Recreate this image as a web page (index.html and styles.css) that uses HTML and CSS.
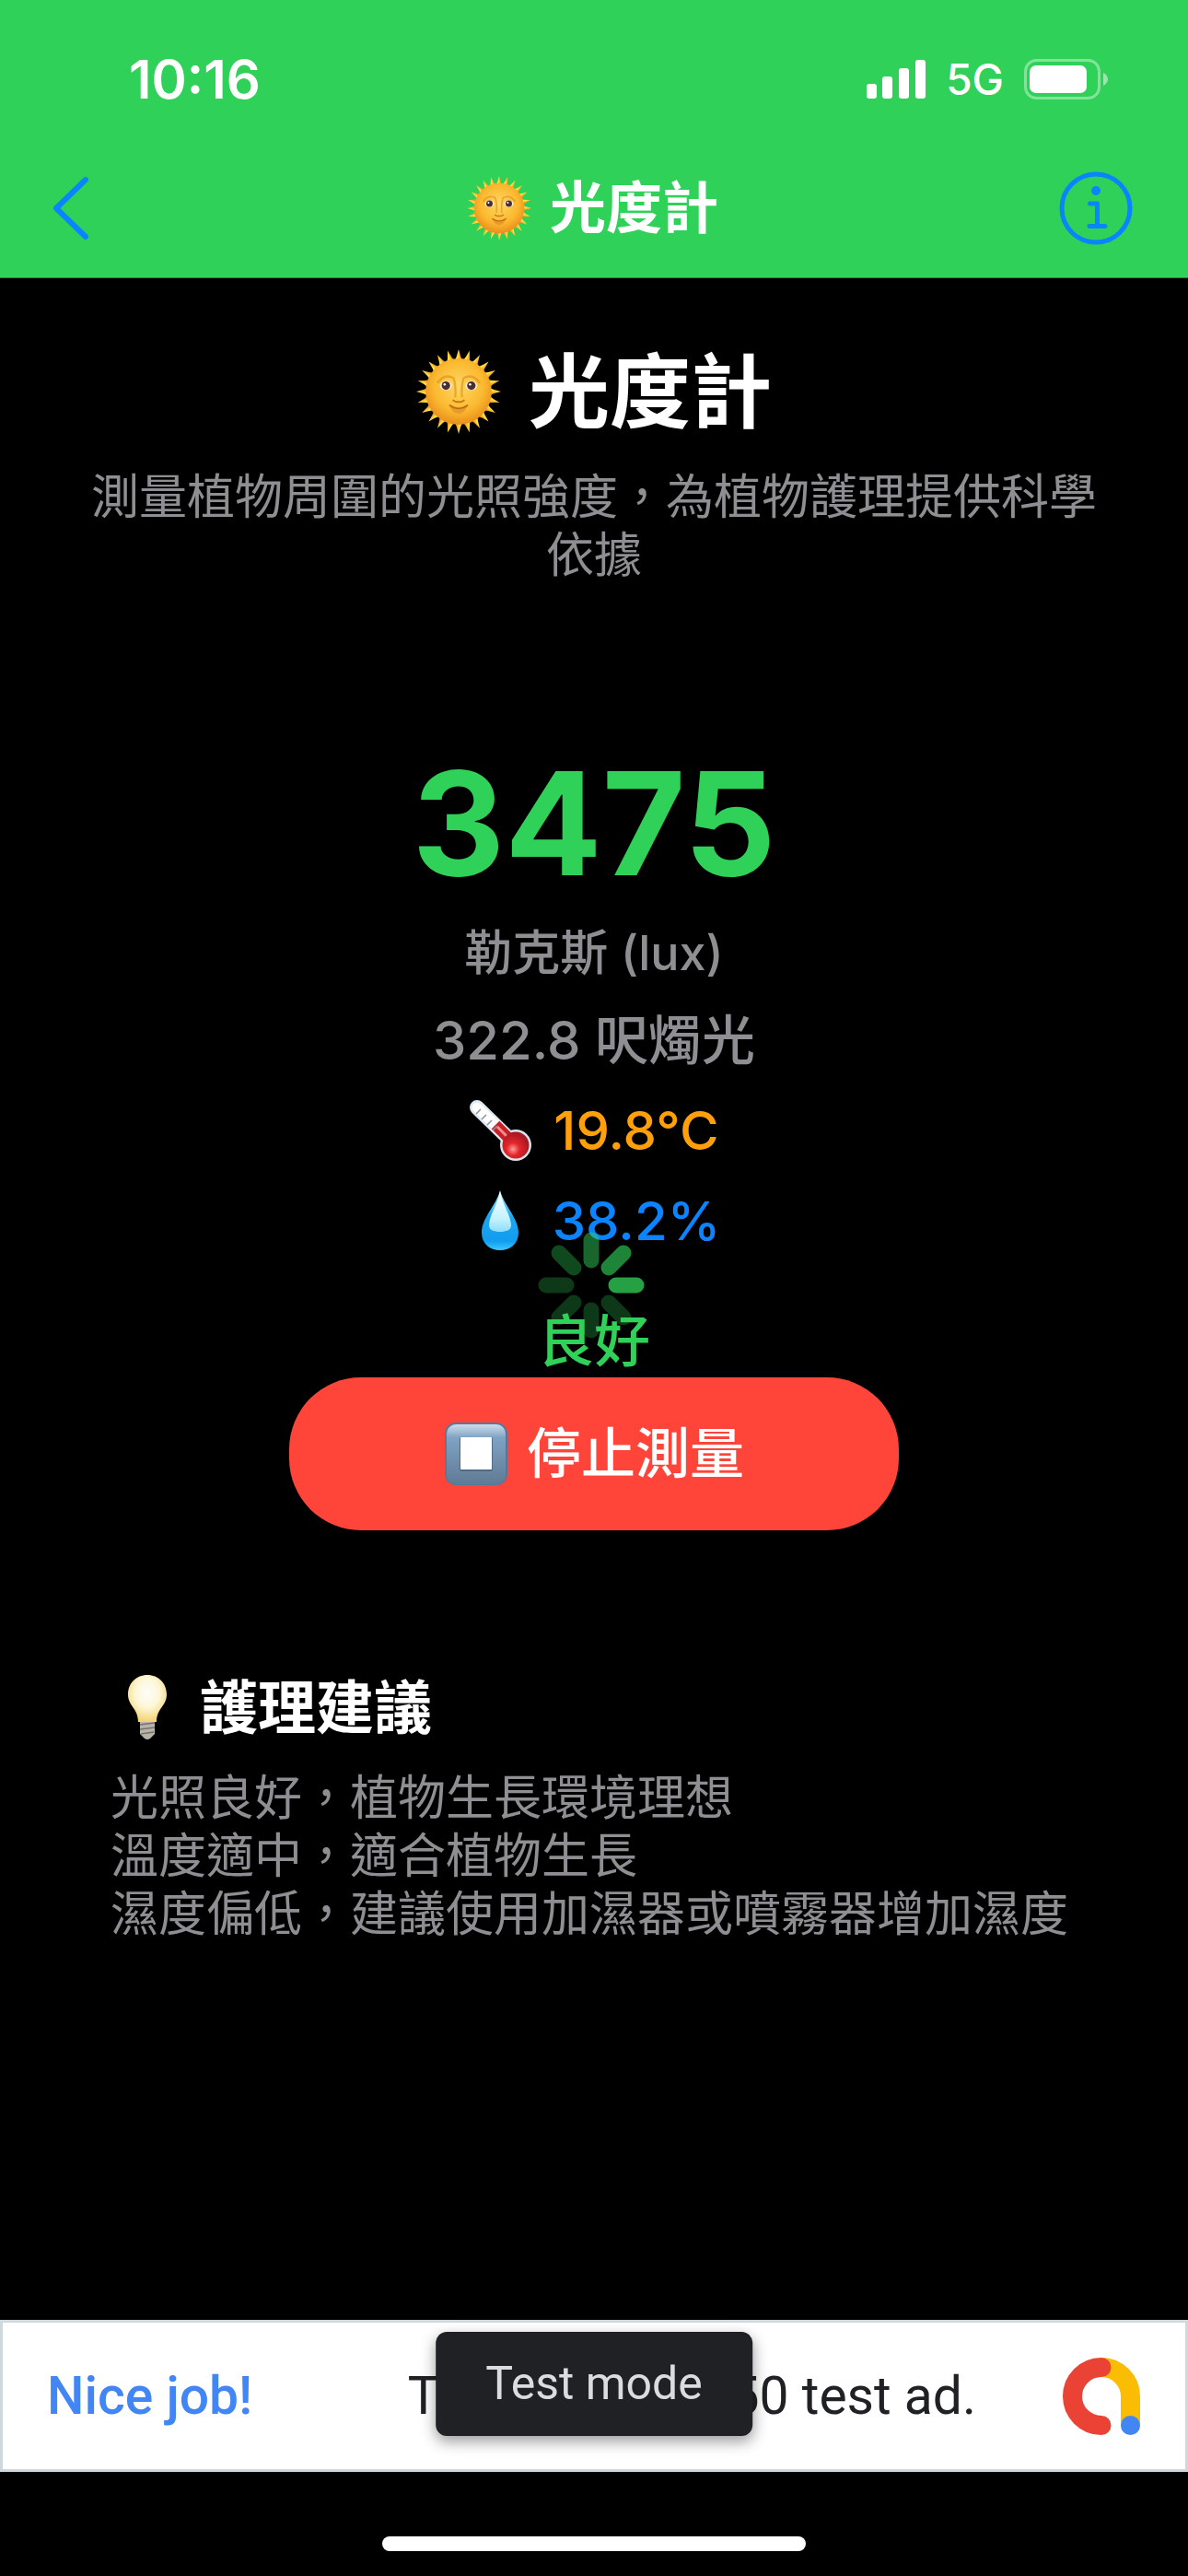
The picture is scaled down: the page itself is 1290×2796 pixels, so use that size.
FILE: index.html
```html
<!DOCTYPE html>
<html lang="zh-Hant">
<head>
    <meta charset="UTF-8">
    <meta name="viewport" content="width=device-width, initial-scale=1">
    <title>光度計</title>
    <link rel="stylesheet" href="styles.css">
</head>
<body>
    <svg class="defs" aria-hidden="true">
        <defs>
            <radialGradient id="sunFace" cx="50%" cy="42%" r="58%">
                <stop offset="0" stop-color="#ffd764"/>
                <stop offset="0.65" stop-color="#fbb92f"/>
                <stop offset="1" stop-color="#e98f1c"/>
            </radialGradient>
            <linearGradient id="ray" x1="0" x2="1" y1="0" y2="0">
                <stop offset="0.4" stop-color="#ffe23d"/>
                <stop offset="0.7" stop-color="#f39a2b"/>
            </linearGradient>
            <g id="rays">
                <path id="oneRay" d="M44.5 16 Q48 9 50 0 Q52 9 55.5 16 Z" fill="url(#ray)"/>
                <use href="#oneRay" transform="rotate(15 50 50)"/>
                <use href="#oneRay" transform="rotate(30 50 50)"/>
                <use href="#oneRay" transform="rotate(45 50 50)"/>
                <use href="#oneRay" transform="rotate(60 50 50)"/>
                <use href="#oneRay" transform="rotate(75 50 50)"/>
            </g>
            <symbol id="sun" viewBox="0 0 100 100">
                <use href="#rays"/>
                <use href="#rays" transform="rotate(90 50 50)"/>
                <use href="#rays" transform="rotate(180 50 50)"/>
                <use href="#rays" transform="rotate(270 50 50)"/>
                <circle cx="50" cy="50" r="39" fill="url(#sunFace)"/>
                <path d="M25 40 Q33 28 44 34 Q47 42 46 57 M75 40 Q67 28 56 34 Q53 42 54 57" fill="none" stroke="#dc921c" stroke-width="2.5" opacity="0.65"/>
                <ellipse cx="35" cy="43" rx="7" ry="5.5" fill="#fff1d0"/>
                <ellipse cx="65" cy="43" rx="7" ry="5.5" fill="#fff1d0"/>
                <circle cx="35" cy="43" r="5" fill="#492f35"/>
                <circle cx="65" cy="43" r="5" fill="#492f35"/>
                <circle cx="33.5" cy="41.5" r="1.4" fill="#fff"/>
                <circle cx="63.5" cy="41.5" r="1.4" fill="#fff"/>
                <path d="M43 60 Q46 63 50 62 Q54 63 57 60" fill="none" stroke="#c97a12" stroke-width="2"/>
                <path d="M39 66 Q50 71 61 66 Q57 76 50 76 Q43 76 39 66 Z" fill="#e99a2c"/>
                <path d="M39 66 Q50 74 61 66" fill="none" stroke="#b9690f" stroke-width="1.6"/>
            </symbol>
            <linearGradient id="drop" x1="0" x2="0" y1="0" y2="1">
                <stop offset="0" stop-color="#a5ebff"/>
                <stop offset="0.45" stop-color="#1ba4f0"/>
                <stop offset="0.85" stop-color="#129df0"/>
                <stop offset="1" stop-color="#3dc9ff"/>
            </linearGradient>
            <linearGradient id="dropShine" x1="0" x2="0" y1="0" y2="1">
                <stop offset="0" stop-color="#fff"/>
                <stop offset="0.7" stop-color="#c0f2ff"/>
                <stop offset="1" stop-color="#8cdcfb"/>
            </linearGradient>
            <radialGradient id="mercury" cx="40%" cy="65%" r="60%">
                <stop offset="0" stop-color="#ff9a96"/>
                <stop offset="0.4" stop-color="#e2262b"/>
                <stop offset="1" stop-color="#a91921"/>
            </radialGradient>
            <linearGradient id="key" x1="0" x2="0" y1="0" y2="1">
                <stop offset="0" stop-color="#cfdde9"/>
                <stop offset="0.22" stop-color="#80a3c4"/>
                <stop offset="1" stop-color="#5f7a94"/>
            </linearGradient>
            <radialGradient id="glass" cx="50%" cy="38%" r="60%">
                <stop offset="0" stop-color="#fffefa"/>
                <stop offset="0.55" stop-color="#fdf6d5"/>
                <stop offset="1" stop-color="#f3d574"/>
            </radialGradient>
        </defs>
    </svg>

    <header class="header">
        <div class="status-bar">
            <time class="clock">10:16</time>
            <div class="status-icons">
                <svg class="signal" viewBox="0 0 64 42" aria-hidden="true">
                    <rect x="0" y="26" width="11" height="16" rx="3"/>
                    <rect x="17" y="18" width="11" height="24" rx="3"/>
                    <rect x="35" y="9" width="11" height="33" rx="3"/>
                    <rect x="53" y="0" width="11" height="42" rx="3"/>
                </svg>
                <span class="network">5G</span>
                <svg class="battery" viewBox="0 0 91 44" aria-hidden="true">
                    <rect x="1.5" y="1.5" width="80" height="41" rx="12" fill="none" stroke="#fff" stroke-opacity="0.4" stroke-width="3"/>
                    <rect x="6" y="7" width="62" height="30" rx="7" fill="#fff"/>
                    <path d="M86 15 Q91 18 91 22 Q91 26 86 29 Z" fill="#fff" fill-opacity="0.5"/>
                </svg>
            </div>
        </div>
        <nav class="nav-bar">
            <button class="icon-button" type="button" aria-label="返回">
                <svg class="icon-back" viewBox="0 0 40 70" aria-hidden="true">
                    <path d="M36 4 L4 35 L36 66"/>
                </svg>
            </button>
            <div class="nav-title">
                <svg class="emoji" aria-hidden="true"><use href="#sun"/></svg>
                <span>光度計</span>
            </div>
            <button class="icon-button" type="button" aria-label="資訊">
                <svg class="icon-info" viewBox="0 0 80 80" aria-hidden="true">
                    <circle cx="40" cy="40" r="37"/>
                    <circle class="dot" cx="40" cy="21" r="5"/>
                    <path d="M33.5 35 H41.5 V59 M33 59.5 H50"/>
                </svg>
            </button>
        </nav>
    </header>

    <main class="content">
        <h1 class="title">
            <svg class="emoji-large" aria-hidden="true"><use href="#sun"/></svg>
            <span>光度計</span>
        </h1>
        <p class="subtitle">測量植物周圍的光照強度，為植物護理提供科學依據</p>

        <section class="readings">
            <div class="lux">3475</div>
            <div class="unit">勒克斯 (lux)</div>
            <div class="reading">322.8 呎燭光</div>
            <div class="reading temperature">
                <svg class="emoji" viewBox="0 0 70 70" aria-hidden="true">
                    <path d="M9 10 L51 51" stroke="#dfe9f1" stroke-width="16" stroke-linecap="round"/>
                    <circle cx="51" cy="51" r="17" fill="#d9e4ec"/>
                    <path d="M9 10 L30 30" stroke="#fff" stroke-width="11" stroke-linecap="round"/>
                    <path d="M29 29 L48 48" stroke="#c81f27" stroke-width="12"/>
                    <path d="M31 31 L43 43" stroke="#f08c8c" stroke-width="3"/>
                    <circle cx="51" cy="51" r="14.5" fill="url(#mercury)"/>
                    <path d="M8 17 L13 12 M14 23 L19 18 M20 29 L25 24 M26 35 L31 30" stroke="#8c9299" stroke-width="1.5"/>
                </svg>
                <span>19.8°C</span>
            </div>
            <div class="reading humidity">
                <svg class="emoji" viewBox="0 0 70 70" aria-hidden="true">
                    <path d="M35 2 C39 18 55 32 55 48 C55 60 46 67 35 67 C24 67 15 60 15 48 C15 32 31 18 35 2 Z" fill="url(#drop)"/>
                    <path d="M35 3 C38 18 47 30 47 40 C47 45 42 47 35 47 C28 47 23 45 23 40 C23 30 32 18 35 3 Z" fill="url(#dropShine)"/>
                </svg>
                <span>38.2%</span>
            </div>
        </section>

        <div class="status">
            <svg class="spinner" viewBox="0 0 116 116" aria-hidden="true">
                <path d="M85 58 H107" opacity="0.77"/>
                <path d="M77 39 L93 23" opacity="0.63"/>
                <path d="M58 31 V9" opacity="0.49"/>
                <path d="M39 39 L23 23" opacity="0.35"/>
                <path d="M31 58 H9" opacity="0.27"/>
                <path d="M39 77 L23 93" opacity="0.27"/>
                <path d="M58 85 V107" opacity="0.27"/>
                <path d="M77 77 L93 93" opacity="0.27"/>
            </svg>
            <span class="status-text">良好</span>
        </div>

        <button class="stop-button" type="button">
            <svg class="emoji" viewBox="0 0 70 70" aria-hidden="true">
                <rect x="1" y="1" width="68" height="68" rx="12" fill="#58789a"/>
                <rect x="3" y="3" width="64" height="65" rx="10" fill="url(#key)"/>
                <rect x="17" y="17" width="36" height="37" rx="2" fill="#506b86"/>
                <rect x="18" y="17" width="34" height="35" rx="1" fill="#fff"/>
            </svg>
            <span>停止測量</span>
        </button>

        <section class="advice">
            <h2 class="advice-title">
                <svg class="emoji" viewBox="0 0 70 70" aria-hidden="true">
                    <path d="M27 50 H43 V64 L38 69 Q35 71 32 69 L27 64 Z" fill="#b9b4a9"/>
                    <path d="M27 54 L43 52 M27 59 L43 57 M28 64 L42 62" stroke="#77736b" stroke-width="1.5"/>
                    <path d="M35 0 C47 0 56 9 56 21 C56 34 45 36 45 51 H25 C25 36 14 34 14 21 C14 9 23 0 35 0 Z" fill="url(#glass)"/>
                </svg>
                <span>護理建議</span>
            </h2>
            <p class="advice-text">
                光照良好，植物生長環境理想<br>
                溫度適中，適合植物生長<br>
                濕度偏低，建議使用加濕器或噴霧器增加濕度
            </p>
        </section>
    </main>

    <footer class="footer">
        <div class="ad">
            <span class="ad-title">Nice job!</span>
            <span class="ad-text">This is a 320x50 test ad.</span>
            <svg class="ad-logo" viewBox="0 0 84 84" aria-hidden="true">
                <path d="M42 10.5 A31.5 31.5 0 0 1 73.5 42 V73" stroke="#fbbc04"/>
                <path d="M42 10.5 A31.5 31.5 0 0 0 42 73.5" stroke="#ea4335"/>
                <circle cx="73.5" cy="73.5" r="10.5" fill="#4285f4"/>
            </svg>
            <div class="toast">Test mode</div>
        </div>
        <div class="home-indicator"></div>
    </footer>
</body>
</html>
```
FILE: styles.css
```css
* {
    box-sizing: border-box;
}
body {
    margin: 0;
    min-height: 100vh;
    display: flex;
    flex-direction: column;
    background-color: #000;
    color: #fff;
    font-family: Inter, "Noto Sans CJK TC", sans-serif;
    font-size: 52px;
}
h1, h2, p {
    margin: 0;
}
button {
    padding: 0;
    border: none;
    background: none;
    color: inherit;
    font-family: inherit;
    cursor: pointer;
}
svg {
    display: block;
    flex: none;
}
.defs {
    position: absolute;
    width: 0;
    height: 0;
}
.emoji {
    width: 70px;
    height: 70px;
}
.emoji-large {
    width: 92px;
    height: 92px;
}

/* header */
.header {
    background-color: #30d158;
    border-bottom: 1px solid #26863f;
}
.status-bar {
    display: flex;
    justify-content: space-between;
    align-items: center;
    height: 150px;
    padding: 22px 87px 0 140px;
}
.clock {
    font-size: 58px;
    font-weight: 600;
}
.status-icons {
    display: flex;
    align-items: center;
    gap: 22px;
}
.signal {
    width: 64px;
    height: 42px;
    fill: #fff;
}
.network {
    font-size: 46px;
    font-weight: 500;
}
.battery {
    width: 91px;
    height: 44px;
}
.nav-bar {
    display: flex;
    justify-content: space-between;
    align-items: center;
    height: 151px;
    padding: 0 60px 0 57px;
}
.icon-button {
    display: flex;
    width: 80px;
}
.icon-back {
    width: 40px;
    height: 70px;
    fill: none;
    stroke: #0a84ff;
    stroke-width: 6;
    stroke-linecap: round;
    stroke-linejoin: round;
}
.icon-info {
    width: 80px;
    height: 80px;
    fill: none;
    stroke: #0a84ff;
    stroke-width: 5;
    stroke-linecap: round;
    stroke-linejoin: round;
}
.icon-info .dot {
    fill: #0a84ff;
    stroke: none;
}
.nav-title {
    display: flex;
    align-items: center;
    gap: 20px;
    font-size: 61px;
    font-weight: 600;
    line-height: 80px;
}

/* content */
.content {
    flex: 1;
    display: flex;
    flex-direction: column;
    align-items: center;
    padding: 63px 80px 0;
}
.title {
    display: flex;
    align-items: center;
    gap: 30px;
    font-size: 88px;
    font-weight: 700;
    line-height: 120px;
}
.subtitle {
    margin-top: 23px;
    color: #8e8e93;
    line-height: 63px;
    text-align: center;
}
.readings {
    display: flex;
    flex-direction: column;
    align-items: center;
    gap: 26px;
    margin-top: 177px;
}
.lux {
    color: #30d158;
    font-size: 156px;
    font-weight: 700;
    line-height: 166px;
}
.unit {
    color: #8e8e93;
    font-weight: 500;
    line-height: 64px;
}
.reading {
    display: flex;
    align-items: center;
    gap: 22px;
    height: 72px;
    color: #8e8e93;
    font-size: 58px;
    font-weight: 500;
    line-height: 72px;
}
.temperature {
    color: #ff9f0a;
}
.humidity {
    color: #0a84ff;
}
.status {
    position: relative;
    margin-top: 60px;
    color: #30d158;
    font-size: 61px;
    font-weight: 500;
    line-height: 70px;
}
.status-text {
    position: relative;
}
.spinner {
    position: absolute;
    left: 50%;
    bottom: 38px;
    width: 116px;
    margin-left: -61px;
    fill: none;
    stroke: #30d158;
    stroke-width: 17;
    stroke-linecap: round;
}
.stop-button {
    display: flex;
    align-items: center;
    gap: 20px;
    height: 166px;
    margin-top: 4px;
    padding: 0 168px;
    border-radius: 78px;
    background-color: #ff453a;
    font-size: 59px;
    font-weight: 500;
    line-height: 70px;
}
.advice {
    align-self: stretch;
    margin-top: 154px;
    padding: 0 40px;
}
.advice-title {
    display: flex;
    align-items: center;
    gap: 22px;
    padding-left: 5px;
    font-size: 63px;
    font-weight: 700;
    line-height: 76px;
}
.advice-text {
    margin-top: 29px;
    color: #8e8e93;
    line-height: 63px;
}

/* test ad */
.ad {
    position: relative;
    display: flex;
    align-items: center;
    height: 165px;
    padding: 0 49px 0 48px;
    border: 3px solid #cfd8dc;
    background-color: #fff;
    color: #202124;
    font-family: Roboto, sans-serif;
    font-size: 57px;
}
.ad-title {
    color: #4285f4;
    font-weight: 500;
}
.ad-text {
    margin: 0 94px 0 auto;
}
.ad-logo {
    width: 84px;
    height: 84px;
    fill: none;
    stroke-width: 21;
    stroke-linecap: round;
}
.ad-logo circle {
    stroke: none;
}
.toast {
    position: absolute;
    top: 10px;
    left: 50%;
    transform: translateX(-50%);
    padding: 0 54px;
    border-radius: 12px;
    background-color: #202124;
    box-shadow: 0 6px 16px rgba(0, 0, 0, 0.4);
    color: #dadce0;
    font-size: 50px;
    line-height: 113px;
    white-space: nowrap;
}
.home-indicator {
    width: 36%;
    max-width: 460px;
    height: 16px;
    margin: 70px auto 27px;
    border-radius: 8px;
    background-color: #fff;
}
```
